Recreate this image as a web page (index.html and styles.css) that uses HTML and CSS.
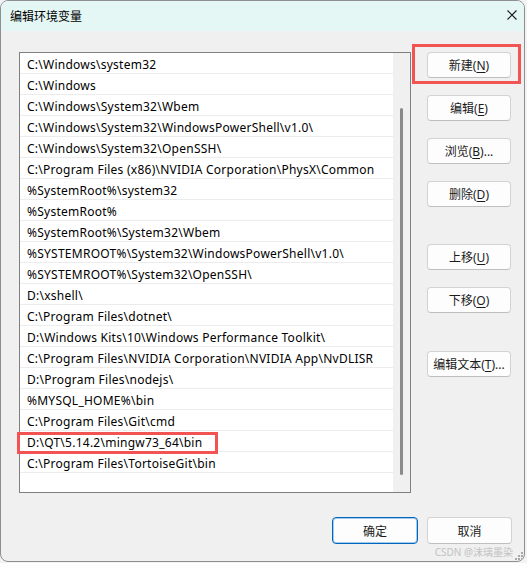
FILE: index.html
```html
<!DOCTYPE html>
<html lang="zh-CN">
<head>
    <meta charset="UTF-8">
    <meta name="viewport" content="width=device-width, initial-scale=1.0">
    <title>编辑环境变量</title>
    <link rel="stylesheet" href="styles.css">
</head>
<body>

<div class="window">
    <div class="titlebar">
        <span class="title">编辑环境变量</span>
        <span class="close">
            <svg width="10" height="10" viewBox="0 0 10 10">
                <path d="M0.5 0.5 L9.5 9.5 M9.5 0.5 L0.5 9.5" stroke="#1a1a1a" stroke-width="1.1" fill="none"/>
            </svg>
        </span>
    </div>

    <div class="content">
        <div class="main">
            <!-- daftar path -->
            <div class="listbox">
                <ul class="paths">
                    <li>C:\Windows\system32</li>
                    <li>C:\Windows</li>
                    <li>C:\Windows\System32\Wbem</li>
                    <li>C:\Windows\System32\WindowsPowerShell\v1.0\</li>
                    <li>C:\Windows\System32\OpenSSH\</li>
                    <li>C:\Program Files (x86)\NVIDIA Corporation\PhysX\Common</li>
                    <li>%SystemRoot%\system32</li>
                    <li>%SystemRoot%</li>
                    <li>%SystemRoot%\System32\Wbem</li>
                    <li>%SYSTEMROOT%\System32\WindowsPowerShell\v1.0\</li>
                    <li>%SYSTEMROOT%\System32\OpenSSH\</li>
                    <li>D:\xshell\</li>
                    <li>C:\Program Files\dotnet\</li>
                    <li>D:\Windows Kits\10\Windows Performance Toolkit\</li>
                    <li>C:\Program Files\NVIDIA Corporation\NVIDIA App\NvDLISR</li>
                    <li>D:\Program Files\nodejs\</li>
                    <li>%MYSQL_HOME%\bin</li>
                    <li>C:\Program Files\Git\cmd</li>
                    <li>D:\QT\5.14.2\mingw73_64\bin<span class="mark mark-row"></span></li>
                    <li>C:\Program Files\TortoiseGit\bin</li>
                </ul>
                <div class="scrollbar"><div class="thumb"></div></div>
            </div>

            <!-- tombol samping -->
            <div class="actions">
                <button class="btn btn-new">新建(<u>N</u>)<span class="mark mark-new"></span></button>
                <button class="btn">编辑(<u>E</u>)</button>
                <button class="btn">浏览(<u>B</u>)...</button>
                <button class="btn">删除(<u>D</u>)</button>
                <button class="btn btn-up">上移(<u>U</u>)</button>
                <button class="btn">下移(<u>O</u>)</button>
                <button class="btn btn-text">编辑文本(<u>T</u>)...</button>
            </div>
        </div>

        <div class="footer">
            <button class="btn btn-ok">确定</button>
            <button class="btn btn-cancel">取消</button>
        </div>
    </div>

    <div class="watermark">CSDN @沫璃墨染</div>
    <svg class="grip" width="8" height="8" viewBox="0 0 8 8">
        <rect x="6" y="0" width="2" height="2" fill="#a8a8a8"/>
        <rect x="3" y="3" width="2" height="2" fill="#a8a8a8"/>
        <rect x="6" y="3" width="2" height="2" fill="#a8a8a8"/>
        <rect x="0" y="6" width="2" height="2" fill="#a8a8a8"/>
        <rect x="3" y="6" width="2" height="2" fill="#a8a8a8"/>
        <rect x="6" y="6" width="2" height="2" fill="#a8a8a8"/>
    </svg>
</div>

</body>
</html>
```

FILE: styles.css
```css
body {
    margin: 0;
    background-color: #f3f3f3;
    font-family: "Noto Sans", "Noto Sans CJK SC", sans-serif;
    font-size: 12px;
    color: #000;
}
.window {
    position: relative;
    width: 525px;
    height: 562px;
    box-sizing: border-box;
    border: 1px solid #8f8f8f;
    border-radius: 8px;
    overflow: hidden;
    background-color: #f0f0f0;
    display: flex;
    flex-direction: column;
}
.titlebar {
    height: 30px;
    flex-shrink: 0;
    background-color: #e5f7f5;
    display: flex;
    align-items: center;
    justify-content: space-between;
    padding: 0 7px 0 9px;
}
.title {
    font-size: 12px;
    margin-top: -1px;
}
.close {
    display: flex;
    margin-top: -2px;
}
.content {
    flex: 1;
    padding: 21px 12px 0 18px;
    display: flex;
    flex-direction: column;
}
.main {
    display: flex;
    gap: 16px;
}
.listbox {
    width: 392px;
    height: 441px;
    box-sizing: border-box;
    border: 1px solid #7f7f7f;
    background-color: #fff;
    display: flex;
}
.paths {
    flex: 1;
    list-style: none;
    margin: 0;
    padding: 0;
}
.paths li {
    position: relative;
    height: 20px;
    line-height: 23px;
    border-bottom: 1px solid #ececec;
    padding-left: 7px;
    white-space: nowrap;
    letter-spacing: 0.25px;
}
.scrollbar {
    width: 17px;
    background-color: #f0f0f0;
    display: flex;
    justify-content: center;
}
.thumb {
    width: 3px;
    height: 367px;
    margin-top: 55px;
    background-color: #8a8a8a;
    border-radius: 2px;
}
.actions {
    width: 84px;
    display: flex;
    flex-direction: column;
    gap: 17px;
}
.btn {
    position: relative;
    height: 26px;
    box-sizing: border-box;
    border: 1px solid #d3d3d3;
    border-bottom-color: #bfbfbf;
    border-radius: 4px;
    background-color: #fdfdfd;
    font: inherit;
    font-size: 12px;
    color: #1b1b1b;
    padding: 0;
}
.btn u {
    text-underline-offset: 2px;
}
.btn-up {
    margin-top: 20px;
}
.btn-text {
    margin-top: 21px;
}
.footer {
    margin-top: 24px;
    display: flex;
    justify-content: flex-end;
    gap: 9px;
}
.footer .btn {
    height: 27px;
}
.btn-ok {
    width: 86px;
    border: 1px solid #0067c0;
    box-shadow: inset 0 0 0 1px rgba(0, 103, 192, 0.35);
}
.btn-cancel {
    width: 85px;
}
/* kotak merah penanda */
.mark {
    position: absolute;
    box-sizing: border-box;
    border: 3px solid #f25454;
    pointer-events: none;
}
.mark-new {
    top: -9px;
    left: -16px;
    right: -11px;
    bottom: -7px;
}
.mark-row {
    top: 1px;
    left: -3px;
    width: 201px;
    height: 22px;
}
.watermark {
    position: absolute;
    right: 11px;
    bottom: 3px;
    font-size: 10px;
    line-height: 12px;
    color: #c2c2c2;
}
.grip {
    position: absolute;
    right: 1px;
    bottom: 1px;
}
```
